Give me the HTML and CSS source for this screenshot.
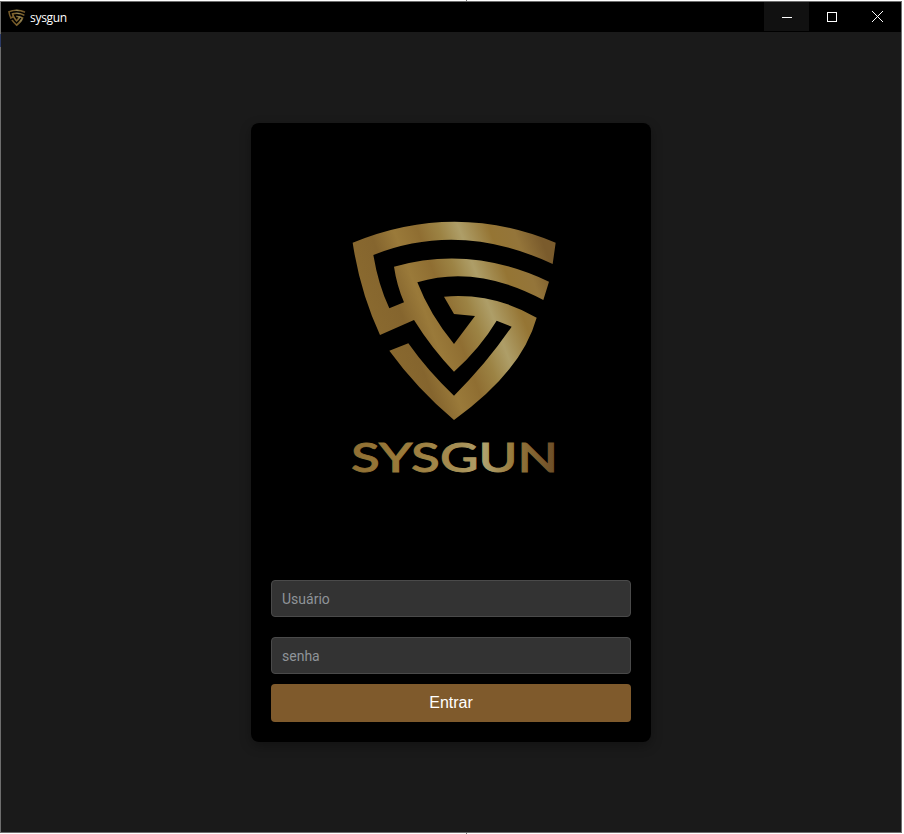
FILE: index.html
```html
<!DOCTYPE html>
<html lang="pt">
<head>
<meta charset="utf-8">
<title>sysgun</title>
<link rel="stylesheet" href="styles.css">
</head>
<body>
<svg class="defs" width="0" height="0" aria-hidden="true">
  <defs>
    <linearGradient id="gold" gradientUnits="userSpaceOnUse" x1="60" y1="300" x2="690" y2="60">
      <stop offset="0" stop-color="#8c6c30"/>
      <stop offset="0.2" stop-color="#85652e"/>
      <stop offset="0.3" stop-color="#9a7a3a"/>
      <stop offset="0.4" stop-color="#8f6e32"/>
      <stop offset="0.49" stop-color="#9c8344"/>
      <stop offset="0.575" stop-color="#ae9e68"/>
      <stop offset="0.7" stop-color="#957534"/>
      <stop offset="0.8" stop-color="#94753a"/>
      <stop offset="0.9" stop-color="#7a5b2c"/>
      <stop offset="1" stop-color="#7a5b2c"/>
    </linearGradient>
    <linearGradient id="wordgold" gradientUnits="userSpaceOnUse" x1="7" y1="0" x2="209" y2="0">
      <stop offset="0" stop-color="#8f6f33"/>
      <stop offset="0.25" stop-color="#9a7a3a"/>
      <stop offset="0.5" stop-color="#a58c50"/>
      <stop offset="0.66" stop-color="#b0a06c"/>
      <stop offset="0.8" stop-color="#987a3c"/>
      <stop offset="1" stop-color="#6f5029"/>
    </linearGradient>
    <symbol id="shield" viewBox="0 0 735 675">
      <path fill="url(#gold)" d="M68 113Q375 -13 677 113L668 177Q390 47 130 150Q145 240 178 310L222 292Q200 240 192 185Q424 119 657 230L640 285Q440 178 262 232Q300 330 372 417L435 333L372 327L342 275Q490 262 620 338Q575 500 372 645Q260 550 178 437L235 415Q295 500 372 572Q470 475 545 365L500 347Q450 430 372 500Q305 430 252 345L150 390Q90 260 68 113Z"/>
    </symbol>
  </defs>
</svg>
<span class="tick tick-top"></span>
<span class="tick tick-bottom"></span>
<span class="edge-mark"></span>
<div class="window">
  <header class="titlebar">
    <div class="app-title">
      <svg class="app-icon" viewBox="0 0 735 675"><use href="#shield"/></svg>
      <span class="app-name">sysgun</span>
    </div>
    <div class="controls">
      <div class="control hovered">
        <svg viewBox="0 0 10 10" width="10" height="10"><path d="M0 5.5H10" stroke="#fff"/></svg>
      </div>
      <div class="control">
        <svg viewBox="0 0 10 10" width="10" height="10"><rect x=".5" y=".5" width="9" height="9" fill="none" stroke="#fff"/></svg>
      </div>
      <div class="control close">
        <svg viewBox="0 0 10 10" width="11" height="11"><path d="M0 0L10 10M10 0L0 10" stroke="#fff" stroke-width=".9"/></svg>
      </div>
    </div>
  </header>
  <main class="content">
    <form class="card">
      <div class="brand">
        <svg class="shield" viewBox="0 0 735 675"><use href="#shield"/></svg>
        <svg class="wordmark" viewBox="0 0 216 44" width="216" height="44">
          <text x="7" y="35" textLength="207" lengthAdjust="spacingAndGlyphs" class="wordmark-text">SYSGUN</text>
        </svg>
      </div>
      <input class="field first" type="text" placeholder="Usuário">
      <input class="field" type="password" placeholder="senha">
      <button class="submit" type="button">Entrar</button>
    </form>
  </main>
</div>
</body>
</html>
```

FILE: styles.css
```css
* { box-sizing: border-box; }
html, body { margin: 0; height: 100%; background: #fff; }
body { padding-top: 1px; }
.defs { position: absolute; }
.tick {
  position: absolute;
  left: 466px;
  width: 1px;
  height: 1px;
  background: #777;
}
.tick-top { top: 0; }
.tick-bottom { top: 833px; }
.edge-mark {
  position: absolute;
  left: 0;
  top: 34px;
  width: 1px;
  height: 13px;
  background: #2b3a66;
  z-index: 1;
}
.window {
  position: relative;
  width: 902px;
  height: 832px;
  border: 1px solid #6e6e6e;
  background: #1a1a1a;
  display: flex;
  flex-direction: column;
  overflow: hidden;
}
.titlebar {
  height: 30px;
  background: #000;
  display: flex;
  justify-content: space-between;
  flex: none;
}
.app-title {
  display: flex;
  align-items: center;
  gap: 3px;
  padding-left: 5px;
  color: #fff;
  font: 12px "Open Sans", sans-serif;
}
.app-icon { width: 21px; height: 19px; opacity: .85; }
.app-name { letter-spacing: -.3px; }
.controls { display: flex; }
.control {
  width: 45px;
  height: 29px;
  display: flex;
  align-items: center;
  justify-content: center;
}
.control.close { width: 47px; }
.control.hovered { background: #111; }
.content {
  flex: 1;
  display: flex;
  justify-content: center;
  align-items: flex-start;
  padding-top: 91px;
}
.card {
  width: 400px;
  height: 619px;
  background: #000;
  border-radius: 8px;
  box-shadow: 0 4px 12px rgba(0, 0, 0, .3);
  padding: 0 20px;
  display: flex;
  flex-direction: column;
}
.brand {
  height: 457px;
  flex: none;
  display: flex;
  flex-direction: column;
  align-items: center;
  padding-top: 82px;
  padding-left: 2px;
}
.shield { width: 245px; height: 225px; flex: none; }
.wordmark { margin-top: 7px; flex: none; overflow: visible; }
.wordmark-text {
  font: 500 41px Lato, sans-serif;
  fill: url(#wordgold);
  stroke: url(#wordgold);
  stroke-width: .9px;
}
.field {
  display: block;
  width: 360px;
  height: 37px;
  flex: none;
  padding: 0 10px;
  background: #333;
  border: 1px solid #4a4a4a;
  border-radius: 4px;
  color: #fff;
  font: 14px Roboto, sans-serif;
  margin-bottom: 20px;
  outline: none;
}
.field::placeholder { color: #8f9499; opacity: 1; }
.field + .field { margin-bottom: 10px; }
.submit {
  width: 360px;
  height: 38px;
  flex: none;
  border: 0;
  border-radius: 4px;
  background: #7f5a2c;
  color: #fff;
  font: 16px "Liberation Sans", Arial, sans-serif;
  padding: 0;
}
```
